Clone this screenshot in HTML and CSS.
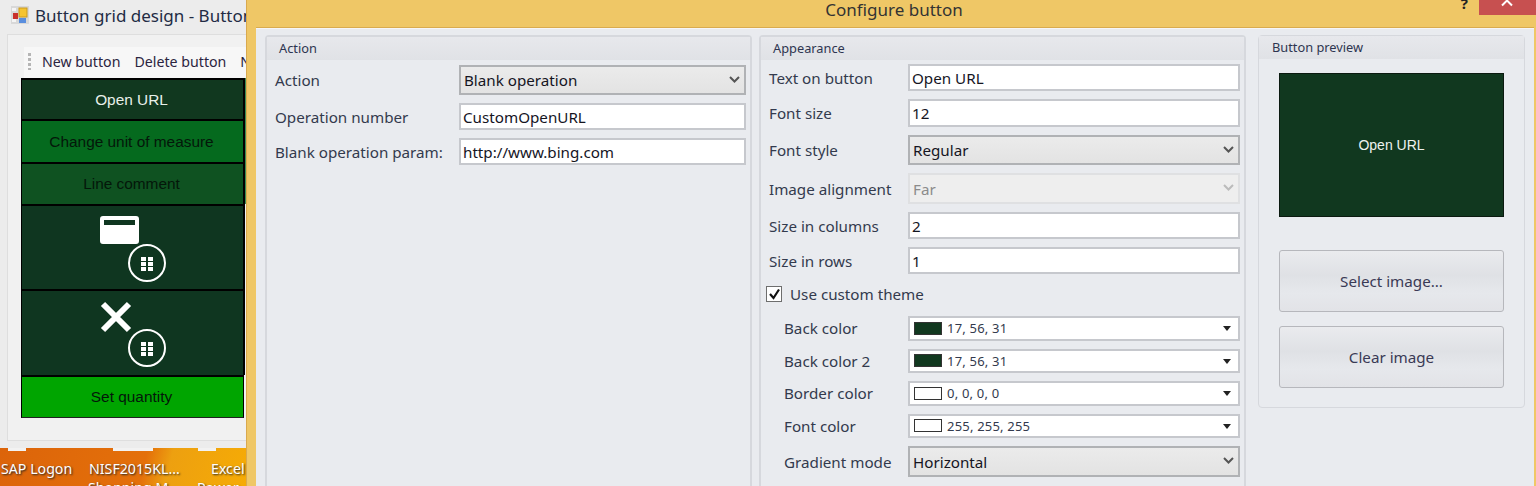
FILE: index.html
```html
<!DOCTYPE html>
<html lang="en">
<head>
    <meta charset="UTF-8">
    <meta name="viewport" content="width=device-width, initial-scale=1.0">
    <title>Configure button</title>
    <link rel="stylesheet" href="styles.css">
</head>
<body>
    <!-- desktop behind the windows -->
    <div class="desktop">
        <div class="shortcut shortcut-sap">SAP Logon</div>
        <div class="shortcut shortcut-nisf">NISF2015KL...</div>
        <div class="shortcut shortcut-excel">Excel</div>
        <div class="shortcut shortcut-shop">Shopping M...</div>
        <div class="shortcut shortcut-power">Power...</div>
        <div class="tab tab-a"></div>
        <div class="tab tab-b"></div>
        <div class="tab tab-c"></div>
    </div>

    <!-- window in the back -->
    <div class="grid-window">
        <div class="grid-title">
            <svg class="app-icon" width="18" height="18" viewBox="0 0 18 18">
                <rect width="18" height="18" fill="#d8d8d8"/>
                <rect x="1" y="2" width="4" height="3" fill="#f4f4f4"/>
                <rect x="1" y="13" width="4" height="3" fill="#f4f4f4"/>
                <rect x="2" y="7" width="5" height="6" fill="#c9302c"/>
                <rect x="8" y="2" width="8" height="9" fill="#f5c431" stroke="#c99a20"/>
                <rect x="8" y="12" width="7" height="5" fill="#5a8ede"/>
            </svg>
            <span class="grid-title-text">Button grid design - Button grid</span>
        </div>
        <div class="grid-body">
            <div class="toolbar">
                <span class="grip"></span>
                <span class="tool">New button</span>
                <span class="tool">Delete button</span>
                <span class="tool">New</span>
            </div>
            <div class="btn-grid">
                <div class="cell h41 dark light-text">Open URL</div>
                <div class="cell h43 green">Change unit of measure</div>
                <div class="cell h42 mid">Line comment</div>
                <div class="cell h85 dark2">
                    <svg class="cell-icon" width="70" height="70" viewBox="0 0 70 70">
                        <path fill-rule="evenodd" fill="#fff" d="M3 0h33a3 3 0 0 1 3 3v22a3 3 0 0 1-3 3H3a3 3 0 0 1-3-3V3a3 3 0 0 1 3-3zM4 4v5h31V4z"/>
                        <circle cx="47" cy="47" r="18" fill="#0f3620" stroke="#fff" stroke-width="2"/>
                        <path fill="#fff" d="M41 41h5v4h-5zM48 41h5v4h-5zM41 46h5v4h-5zM48 46h5v4h-5zM41 51h5v4h-5zM48 51h5v4h-5z"/>
                    </svg>
                </div>
                <div class="cell h86 dark2">
                    <svg class="cell-icon" width="70" height="70" viewBox="0 0 70 70">
                        <path fill="none" stroke="#fff" stroke-width="6" d="M3 3l26 26M29 3L3 29"/>
                        <circle cx="47" cy="47" r="18" fill="#0f3620" stroke="#fff" stroke-width="2"/>
                        <path fill="#fff" d="M41 41h5v4h-5zM48 41h5v4h-5zM41 46h5v4h-5zM48 46h5v4h-5zM41 51h5v4h-5zM48 51h5v4h-5z"/>
                    </svg>
                </div>
                <div class="cell cell-last bright">Set quantity</div>
            </div>
        </div>
    </div>

    <!-- dialog -->
    <div class="dialog">
        <div class="dialog-title">
            <span>Configure button</span>
            <span class="help">?</span>
            <span class="close"><svg width="57" height="15" viewBox="0 0 57 15"><path d="M23 5.500L33-4.500M33 5.500L23-4.500" fill="none" stroke="#fff" stroke-width="2"/></svg></span>
        </div>
        <div class="client">
            <section class="panel panel-action">
                <h2>Action</h2>
                <div class="rows rows-action">
                    <div class="row"><label>Action</label><div class="combo h30">Blank operation<svg class="chev" width="11" height="7" viewBox="0 0 11 7"><path d="M1 1l4.500 4.500L10 1" fill="none" stroke="#555" stroke-width="2"/></svg></div></div>
                    <div class="row"><label>Operation number</label><div class="field">CustomOpenURL</div></div>
                    <div class="row"><label>Blank operation param:</label><div class="field">http://www.bing.com</div></div>
                </div>
            </section>

            <section class="panel panel-appearance">
                <h2>Appearance</h2>
                <div class="rows rows-appearance">
                    <div class="row"><label>Text on button</label><div class="field">Open URL</div></div>
                    <div class="row"><label>Font size</label><div class="field h28">12</div></div>
                    <div class="row"><label>Font style</label><div class="combo h30">Regular<svg class="chev" width="11" height="7" viewBox="0 0 11 7"><path d="M1 1l4.500 4.500L10 1" fill="none" stroke="#555" stroke-width="2"/></svg></div></div>
                    <div class="row"><label>Image alignment</label><div class="combo h31 disabled">Far<svg class="chev" width="11" height="7" viewBox="0 0 11 7"><path d="M1 1l4.500 4.500L10 1" fill="none" stroke="#bbb" stroke-width="2"/></svg></div></div>
                    <div class="row"><label>Size in columns</label><div class="field">2</div></div>
                    <div class="row"><label>Size in rows</label><div class="field">1</div></div>
                    <div class="check-row">
                        <span class="checkbox"><svg width="13" height="12" viewBox="0 0 13 12"><path d="M2 6l3.500 4L11 1.500" fill="none" stroke="#111" stroke-width="2.200"/></svg></span>
                        <span>Use custom theme</span>
                    </div>
                    <div class="row sub"><label>Back color</label><div class="color-pick"><i class="swatch swatch-dark"></i><span>17, 56, 31</span><b class="arrow"></b></div></div>
                    <div class="row sub"><label>Back color 2</label><div class="color-pick"><i class="swatch swatch-dark"></i><span>17, 56, 31</span><b class="arrow"></b></div></div>
                    <div class="row sub"><label>Border color</label><div class="color-pick"><i class="swatch"></i><span>0, 0, 0, 0</span><b class="arrow"></b></div></div>
                    <div class="row sub"><label>Font color</label><div class="color-pick"><i class="swatch"></i><span>255, 255, 255</span><b class="arrow"></b></div></div>
                    <div class="row sub"><label>Gradient mode</label><div class="combo h31">Horizontal<svg class="chev" width="11" height="7" viewBox="0 0 11 7"><path d="M1 1l4.500 4.500L10 1" fill="none" stroke="#555" stroke-width="2"/></svg></div></div>
                </div>
            </section>

            <section class="panel panel-preview">
                <h2>Button preview</h2>
                <div class="preview-body">
                    <div class="preview-btn">Open URL</div>
                    <div class="push-btn">Select image...</div>
                    <div class="push-btn">Clear image</div>
                </div>
            </section>
        </div>
    </div>
</body>
</html>
```

FILE: styles.css
```css
html, body {
    margin: 0;
    padding: 0;
    width: 1536px;
    height: 486px;
    overflow: hidden;
}
body {
    position: relative;
    font-family: "Noto Sans", "Open Sans", sans-serif;
    font-size: 15.2px;
    color: #333a4d;
    background: #e87a10;
}
* {
    box-sizing: border-box;
}

/* desktop */
.desktop {
    position: absolute;
    left: 0;
    top: 448px;
    width: 246px;
    height: 38px;
    overflow: hidden;
    background: linear-gradient(105deg, #dc640a 0%, #e4700a 58%, #eda010 68%, #f6ab05 100%);
}
.shortcut {
    position: absolute;
    color: #fff;
    font-size: 14.2px;
    line-height: 20px;
    white-space: nowrap;
    text-shadow: 1px 1px 2px #222;
}
.shortcut-sap { left: 1px; top: 11px; }
.shortcut-nisf { left: 89px; top: 11px; }
.shortcut-excel { left: 211px; top: 11px; }
.shortcut-shop { left: 88px; top: 30px; }
.shortcut-power { left: 197px; top: 30px; }
.tab {
    position: absolute;
    top: 0;
    height: 3px;
    background: #f2f2f2;
}
.tab-a { left: 8px; width: 18px; }
.tab-b { left: 113px; width: 40px; }
.tab-c { left: 198px; width: 18px; }

/* back window */
.grid-window {
    position: absolute;
    left: 0;
    top: 0;
    width: 246px;
    height: 448px;
    overflow: hidden;
    background: #ececec;
}
.grid-title {
    display: flex;
    align-items: center;
    height: 33px;
    padding: 0 0 3px 11px;
    white-space: nowrap;
    color: #222b44;
    font-size: 17px;
}
.app-icon {
    margin-right: 6px;
    flex: none;
}
.grid-body {
    margin: 1px 0 0 7px;
    height: 407px;
    border: 1px solid #dedede;
    border-right: none;
    background: #f1f1f1;
    padding: 12px 0 0 13px;
}
.toolbar {
    display: flex;
    align-items: center;
    gap: 14px;
    height: 31px;
    padding: 0 0 3px 4px;
    margin-left: 3px;
    background: #f7f7f7;
    white-space: nowrap;
    overflow: hidden;
    color: #2b2440;
    font-size: 14.2px;
}
.grip {
    flex: none;
    width: 3px;
    height: 17px;
    margin-right: -3px;
    background: repeating-linear-gradient(#b5b5b5 0 3px, transparent 3px 5px);
}
.btn-grid {
    display: flex;
    flex-direction: column;
    width: 225px;
    background: linear-gradient(#3a8a55 0 126px, transparent 126px);
}
.cell {
    display: flex;
    align-items: center;
    justify-content: center;
    width: 224px;
    border: 2px solid #000;
    border-left-width: 1px;
    border-bottom: none;
    color: #04170a;
    font-family: "Liberation Sans", Arial, sans-serif;
    font-size: 15.4px;
    padding-right: 2px;
}
.h41 { height: 41px; }
.h42 { height: 42px; }
.h43 { height: 43px; }
.h85, .h86 { position: relative; }
.h85 { height: 85px; }
.h86 { height: 86px; }
.cell-last {
    height: 43px;
    width: 223px;
    border-bottom: 1px solid #222;
    border-right-width: 1px;
}
.dark { background: #11381f; }
.dark2 { background: #0f3620; }
.green { background: #056a1e; }
.mid { background: #0f5221; }
.bright { background: #00a500; }
.light-text { color: #e8f0ea; }
.cell-icon {
    position: absolute;
    left: 78px;
    top: 10px;
}

/* dialog */
.dialog {
    position: absolute;
    left: 246px;
    top: 0;
    width: 1290px;
    height: 486px;
    background: #efc766;
    border-left: 1px solid #d9a94e;
    padding: 0 2px 0 9px;
}
.dialog-title {
    position: relative;
    height: 28px;
    text-align: center;
    color: #333;
    font-size: 17px;
    line-height: 20px;
    padding-right: 2px;
    border-bottom: 1px solid #d9ab4f;
}
.help {
    position: absolute;
    right: 66px;
    top: -7px;
    font-weight: 700;
    font-size: 15px;
    color: #222;
}
.close {
    position: absolute;
    right: -2px;
    top: 0;
    width: 57px;
    height: 15px;
    overflow: hidden;
    background: #c75050;
}
.close svg {
    display: block;
}
.client {
    display: flex;
    align-items: flex-start;
    gap: 7px;
    height: 458px;
    padding: 6px 0 0 9px;
    background: #e9ebef;
    border-top: 1px solid #f5f6f8;
}
.panel {
    flex: none;
    border: 2px solid #d6d8dd;
    border-radius: 4px;
    background: #e9ebef;
}
.panel h2 {
    margin: 0;
    height: 23px;
    padding-left: 12px;
    background: linear-gradient(#e7e8ec, #e0e2e6);
    font-size: 12.8px;
    font-weight: 400;
    line-height: 22px;
    color: #2e3550;
}
.panel-action {
    width: 487px;
    height: 470px;
}
.panel-appearance {
    width: 487px;
    height: 470px;
}
.panel-preview {
    width: 267px;
    height: 373px;
    margin-left: 5px;
    border-width: 1px;
}
.panel-preview h2 {
    padding-left: 13px;
}
.rows {
    display: flex;
    flex-direction: column;
    gap: 8px;
}
.rows-action {
    padding: 5px 4px 0 8px;
}
.rows-appearance {
    padding: 4px 4px 0 8px;
}
.row {
    display: flex;
    align-items: center;
}
.row label {
    flex: none;
}
.rows-action label {
    width: 184px;
}
.rows-appearance label {
    width: 139px;
}
.rows-appearance .sub label {
    width: 124px;
    margin-left: 15px;
}
.field, .combo, .color-pick {
    flex: 1;
    display: flex;
    align-items: center;
    color: #15151f;
    white-space: nowrap;
}
.field {
    height: 27px;
    padding-left: 2px;
    background: #fff;
    border: 2px solid #c6c8cd;
}
.field.h28 { height: 28px; }
.combo {
    position: relative;
    padding-left: 3px;
    background: linear-gradient(#ebebeb, #e3e3e3);
    border: 2px solid #b0b2b5;
}
.h30 { height: 30px; }
.h31 { height: 31px; }
.combo.disabled {
    background: #eeeeee;
    border-color: #dfe0e2;
    color: #8b8b8b;
}
.chev {
    position: absolute;
    right: 4px;
    top: 9px;
}
.check-row {
    display: flex;
    align-items: center;
    gap: 8px;
    height: 20px;
    margin: 2px 0 4px -3px;
}
.checkbox {
    display: flex;
    align-items: center;
    justify-content: center;
    width: 16px;
    height: 16px;
    background: #fff;
    border: 1px solid #6e6e6e;
}
.color-pick {
    position: relative;
    height: 24.5px;
    padding-left: 4px;
    background: #fff;
    border: 2px solid #c6c8cd;
    font-size: 13px;
    letter-spacing: 0.2px;
    color: #333a4d;
}
.swatch {
    display: block;
    flex: none;
    width: 28px;
    height: 13px;
    margin-right: 5px;
    background: #fff;
    border: 1px solid #333;
}
.swatch-dark {
    background: #11381f;
}
.arrow {
    position: absolute;
    right: 7px;
    top: 8px;
    border-style: solid;
    border-width: 5px 4px 0;
    border-color: #222 transparent transparent;
}
.preview-body {
    display: flex;
    flex-direction: column;
    padding: 14px 20px 0;
}
.preview-btn {
    display: flex;
    align-items: center;
    justify-content: center;
    height: 144px;
    margin-bottom: 33px;
    background: #11381f;
    border: 1px solid #0b1a10;
    color: #eef2ef;
    font-family: "Liberation Sans", Arial, sans-serif;
    font-size: 14px;
}
.push-btn {
    display: flex;
    align-items: center;
    justify-content: center;
    height: 62px;
    margin-bottom: 14px;
    background: linear-gradient(#eaebee, #dfe1e5 40%, #e6e8ec 70%, #e2e3e7);
    border: 1px solid #b6b7bc;
    border-radius: 3px;
    color: #3a3a55;
}
```
